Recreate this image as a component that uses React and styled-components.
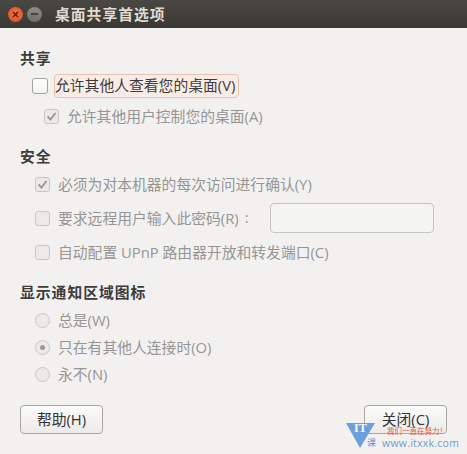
import React from "react";
import styled, { createGlobalStyle } from "styled-components";

const GlobalStyle = createGlobalStyle`
  html, body {
    margin: 0;
    padding: 0;
    background: #f2f1f0;
  }
  * {
    box-sizing: border-box;
  }
`;

const Window = styled.div`
  position: relative;
  width: 467px;
  height: 454px;
  overflow: hidden;
  display: flex;
  flex-direction: column;
  background: #f2f1f0;
  font-family: "Open Sans", "Noto Sans CJK SC", sans-serif;
  font-size: 14.8px;
  color: #3c3c3c;
`;

const TitleBar = styled.div`
  height: 28px;
  flex: none;
  display: flex;
  align-items: center;
  padding-left: 8px;
  background: linear-gradient(#4a4843, #3a3833);
`;

const CloseDot = styled.div`
  width: 15px;
  height: 15px;
  border-radius: 50%;
  background: radial-gradient(circle at 50% 40%, #ee7247, #d9501f);
  display: flex;
  align-items: center;
  justify-content: center;
`;

const MinDot = styled.div`
  width: 15px;
  height: 15px;
  margin-left: 4px;
  border-radius: 50%;
  background: linear-gradient(#8d8c87, #6f6e69);
  display: flex;
  align-items: center;
  justify-content: center;
  &::after {
    content: "";
    width: 7px;
    height: 2px;
    background: #44433f;
  }
`;

const Title = styled.div`
  margin-left: 13px;
  padding-bottom: 2px;
  font-weight: 700;
  letter-spacing: 1px;
  color: #dfdbd2;
`;

const Content = styled.div`
  flex: 1;
  display: flex;
  flex-direction: column;
  padding: 17px 20px 20px;
`;

const Section = styled.div`
  display: flex;
  flex-direction: column;
  margin-bottom: ${({ $gap }) => $gap}px;
`;

const Heading = styled.div`
  height: 28px;
  line-height: 26px;
  font-weight: 700;
  letter-spacing: 1px;
  color: #3c3c3c;
`;

const Row = styled.div`
  display: flex;
  align-items: center;
  height: ${({ $h }) => $h}px;
  padding-left: ${({ $indent }) => $indent}px;
  color: ${({ $off }) => ($off ? "#969594" : "#3c3c3c")};
  white-space: nowrap;
`;

const Label = styled.span`
  padding-bottom: 2px;
`;

const Box = styled.span`
  flex: none;
  width: ${({ $big }) => ($big ? 16 : 15)}px;
  height: ${({ $big }) => ($big ? 16 : 15)}px;
  margin-right: ${({ $big }) => ($big ? 6 : 8)}px;
  border-radius: 3px;
  border: 1px solid ${({ $off }) => ($off ? "#c9c7c4" : "#a5a3a0")};
  background: ${({ $off }) => ($off ? "#ebeae8" : "linear-gradient(#fff, #f4f3f2)")};
  display: flex;
  align-items: center;
  justify-content: center;
`;

const Radio = styled.span`
  flex: none;
  width: 15px;
  height: 15px;
  margin-right: 8px;
  border-radius: 50%;
  border: 1px solid #cbc9c6;
  background: #ebeae8;
  display: flex;
  align-items: center;
  justify-content: center;
  &::after {
    content: "";
    display: ${({ $on }) => ($on ? "block" : "none")};
    width: 5px;
    height: 5px;
    border-radius: 50%;
    background: #9a9997;
  }
`;

const Focused = styled.span`
  height: 24px;
  line-height: 20px;
  padding: 0 3px 0 0;
  border: 1px solid #ecc0b0;
  border-radius: 4px;
  background: #f9ece7;
`;

const PasswordInput = styled.div`
  width: 164px;
  height: 30px;
  margin-left: auto;
  margin-right: 13px;
  border: 1px solid #c6c4c1;
  border-radius: 4px;
  background: #f4f4f3;
`;

const Colon = styled.span`
  margin-left: 6px;
  padding-bottom: 2px;
`;

const Footer = styled.div`
  display: flex;
  justify-content: space-between;
`;

const Button = styled.div`
  width: 83px;
  height: 29px;
  padding-bottom: 2px;
  display: flex;
  align-items: center;
  justify-content: center;
  border: 1px solid #a9a7a4;
  border-radius: 4px;
  background: linear-gradient(#fbfbfa, #ecebe9);
  color: #333;
`;

const Watermark = styled.div`
  position: absolute;
  left: 346px;
  top: 423px;
  width: 121px;
  height: 31px;
`;

const Triangle = styled.svg`
  position: absolute;
  left: 0;
  top: 0;
`;

const MarkIt = styled.span`
  position: absolute;
  left: 8px;
  top: -2px;
  font-family: "Liberation Serif", serif;
  font-size: 12px;
  font-weight: 700;
  color: #fff;
`;

const MarkKe = styled.span`
  position: absolute;
  left: 21px;
  top: 12px;
  font-size: 9px;
  line-height: 16px;
  color: #5b8fd0;
`;

const MarkUrl = styled.span`
  position: absolute;
  left: 36px;
  top: 13px;
  font-size: 10.5px;
  line-height: 14px;
  letter-spacing: 0.25px;
  color: #6f9bd3;
`;

const MarkSlogan = styled.span`
  position: absolute;
  left: 41px;
  top: 3px;
  font-size: 7.5px;
  line-height: 10px;
  color: #e2584e;
  white-space: nowrap;
`;

const Check = ({ color }) => (
  <svg width="11" height="11" viewBox="0 0 11 11">
    <path d="M1.5 5.5 L4.5 8.5 L9.5 2" fill="none" stroke={color} strokeWidth="2" />
  </svg>
);

const App = () => {
  return (
    <Window>
      <GlobalStyle />
      <TitleBar>
        <CloseDot>
          <svg width="7" height="7" viewBox="0 0 7 7">
            <path d="M1 1 L6 6 M6 1 L1 6" stroke="#4a2114" strokeWidth="1.4" />
          </svg>
        </CloseDot>
        <MinDot />
        <Title>桌面共享首选项</Title>
      </TitleBar>
      <Content>
        <Section $gap={10}>
          <Heading>共享</Heading>
          <Row $h={26} $indent={12}>
            <Box $big />
            <Focused>允许其他人查看您的桌面(V)</Focused>
          </Row>
          <Row $h={34} $indent={24} $off>
            <Box $off><Check color="#9b9a98" /></Box>
            <Label>允许其他用户控制您的桌面(A)</Label>
          </Row>
        </Section>
        <Section $gap={14}>
          <Heading>安全</Heading>
          <Row $h={26} $indent={15} $off>
            <Box $off><Check color="#9b9a98" /></Box>
            <Label>必须为对本机器的每次访问进行确认(Y)</Label>
          </Row>
          <Row $h={42} $indent={15} $off>
            <Box $off />
            <Label>要求远程用户输入此密码(R)</Label>
            <Colon>:</Colon>
            <PasswordInput />
          </Row>
          <Row $h={26} $indent={15} $off>
            <Box $off />
            <Label>自动配置 UPnP 路由器开放和转发端口(C)</Label>
          </Row>
        </Section>
        <Section $gap={17}>
          <Heading>显示通知区域图标</Heading>
          <Row $h={27} $indent={15} $off>
            <Radio />
            <Label>总是(W)</Label>
          </Row>
          <Row $h={27} $indent={15} $off>
            <Radio $on />
            <Label>只在有其他人连接时(O)</Label>
          </Row>
          <Row $h={27} $indent={15} $off>
            <Radio />
            <Label>永不(N)</Label>
          </Row>
        </Section>
        <Footer>
          <Button>帮助(H)</Button>
          <Button>关闭(C)</Button>
        </Footer>
      </Content>
      <Watermark>
        <Triangle width="30" height="26" viewBox="0 0 30 26">
          <path d="M0 0 H29 L14 25 Z" fill="#6d9fdc" />
        </Triangle>
        <MarkIt>IT</MarkIt>
        <MarkKe>课</MarkKe>
        <MarkUrl>www.itxxk.com</MarkUrl>
        <MarkSlogan>我们一直在努力！</MarkSlogan>
      </Watermark>
    </Window>
  );
};

export default App;
